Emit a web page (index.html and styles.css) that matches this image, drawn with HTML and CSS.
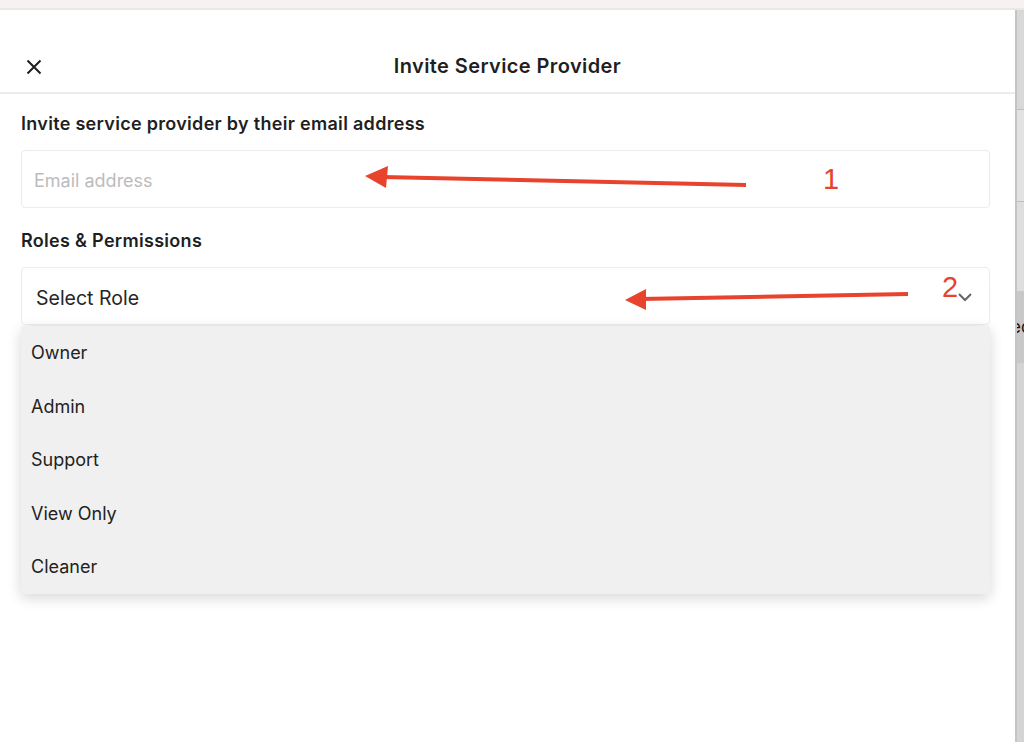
FILE: index.html
```html
<!DOCTYPE html>
<html lang="en">
<head>
    <meta charset="UTF-8">
    <title>Invite Service Provider</title>
    <link rel="stylesheet" href="styles.css">
</head>
<body>
    <div class="topbar"></div>

    <div class="layout">
        <!-- Modal panel -->
        <div class="panel">
            <div class="header">
                <button class="close" aria-label="Close">
                    <svg width="16" height="16" viewBox="0 0 16 16">
                        <path d="M1.5 1.5 L14.5 14.5 M14.5 1.5 L1.5 14.5" stroke="#1f1f1f" stroke-width="2" fill="none"/>
                    </svg>
                </button>
                <h1>Invite Service Provider</h1>
            </div>

            <div class="form">
                <label class="label">Invite service provider by their email address</label>
                <div class="field">
                    <span class="placeholder">Email address</span>
                </div>

                <label class="label roles">Roles &amp; Permissions</label>
                <div class="select-wrap">
                    <div class="field select">
                        <span class="value">Select Role</span>
                        <svg class="chevron" width="16" height="10" viewBox="0 0 16 10">
                            <path d="M2 2 L8 8 L14 2" stroke="#666" stroke-width="2" fill="none"/>
                        </svg>
                    </div>

                    <ul class="menu">
                        <li>Owner</li>
                        <li>Admin</li>
                        <li>Support</li>
                        <li>View Only</li>
                        <li>Cleaner</li>
                    </ul>
                </div>
            </div>

            <!-- Annotation arrows drawn over the screenshot -->
            <svg class="notes" width="1015" height="733" viewBox="0 9 1015 733">
                <line x1="746" y1="184" x2="382" y2="176" stroke="#e8432c" stroke-width="4"/>
                <polygon points="365,175 388,165 386,187" fill="#e8432c"/>
                <text x="823" y="188" class="num">1</text>

                <line x1="908" y1="293" x2="640" y2="298" stroke="#e8432c" stroke-width="4"/>
                <polygon points="625,299 646,288 646,309" fill="#e8432c"/>
                <text x="942" y="296" class="num">2</text>
            </svg>
        </div>

        <!-- Page behind the modal -->
        <div class="behind">
            <div class="b1"></div>
            <div class="b2"></div>
            <div class="b3"></div>
            <div class="b4"><span>ec</span></div>
            <div class="b5"></div>
        </div>
    </div>
</body>
</html>
```

FILE: styles.css
```css
/* General Page Styles */
body {
    margin: 0;
    font-family: 'Inter', 'Liberation Sans', sans-serif;
    color: #1f1f1f;
    background-color: #fff;
    height: 742px;
    overflow: hidden;
}

.topbar {
    height: 8px;
    background-color: #f7f1f1;
    border-bottom: 2px solid #e9e7e7;
}

.layout {
    display: flex;
    height: 732px;
}

.panel {
    position: relative;
    width: 1015px;
    flex-shrink: 0;
    background-color: #fff;
}

/* Header */
.header {
    position: relative;
    height: 84px;
    border-bottom: 2px solid #ececec;
    display: flex;
    align-items: flex-end;
    justify-content: center;
    box-sizing: border-box;
    padding-bottom: 14px;
}

.header h1 {
    margin: 0;
    font-size: 20px;
    font-weight: 600;
    letter-spacing: 0.4px;
    line-height: 24px;
}

.close {
    position: absolute;
    left: 26px;
    top: 49px;
    padding: 0;
    border: none;
    background: none;
    width: 16px;
    height: 16px;
}

.close svg {
    display: block;
}

/* Form */
.form {
    padding: 19px 25px 0 21px;
    display: flex;
    flex-direction: column;
}

.label {
    font-size: 18px;
    font-weight: 600;
    letter-spacing: 0.3px;
    line-height: 22px;
    margin-bottom: 15px;
}

.label.roles {
    margin-top: 22px;
    margin-bottom: 15px;
}

.field {
    height: 58px;
    box-sizing: border-box;
    border: 1px solid #ececec;
    border-radius: 4px;
    display: flex;
    align-items: center;
    padding: 0 12px;
    font-size: 18px;
}

.placeholder {
    color: #bcbcbc;
    font-weight: 400;
    margin-top: 2px;
}

.select-wrap {
    position: relative;
}

.select {
    padding: 0 16px 0 14px;
    justify-content: space-between;
    box-shadow: 0 6px 8px -6px rgba(0, 0, 0, 0.12);
    font-size: 19.5px;
}

.select .value {
    color: #262626;
    margin-top: 3px;
}

.chevron {
    margin-top: 2px;
}

/* Dropdown */
.menu {
    position: absolute;
    left: 0;
    right: 0;
    top: 59px;
    margin: 0;
    padding: 0;
    list-style: none;
    background-color: #f0f0f0;
    border-radius: 3px;
    box-shadow: 0 4px 14px rgba(0, 0, 0, 0.16);
}

.menu li {
    height: 53.5px;
    line-height: 53.5px;
    padding-left: 10px;
    font-size: 18px;
    color: #222;
}

/* Annotations */
.notes {
    position: absolute;
    left: 0;
    top: 0;
    pointer-events: none;
}

.num {
    font-family: 'Liberation Sans', sans-serif;
    font-size: 29px;
    fill: #e8432c;
}

/* Background page on the right */
.behind {
    width: 7px;
    flex-shrink: 0;
    border-left: 2px solid #c4c4c4;
    background-color: #d4d4d4;
    overflow: hidden;
}

.b1 { height: 99px; background-color: #d8d8d8; border-bottom: 1px solid #c0c0c0; }
.b2 { height: 91px; background-color: #e2e2e2; border-bottom: 1px solid #c0c0c0; }
.b3 { height: 89px; background-color: #dedede; }
.b4 {
    height: 72px;
    background-color: #c8c8c8;
    font-size: 17px;
    line-height: 72px;
    color: #111;
    margin-left: -6px;
    white-space: nowrap;
}
.b5 { height: 380px; background-color: #d4d4d4; }
```
